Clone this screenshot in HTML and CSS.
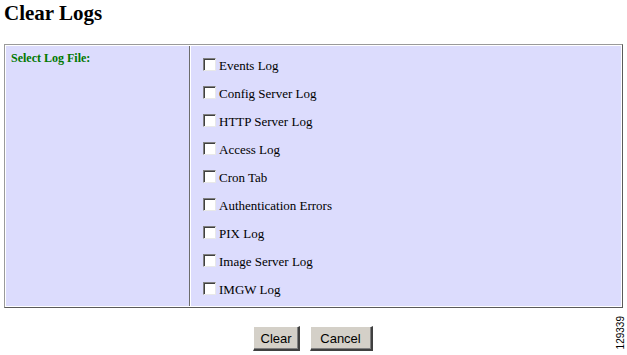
FILE: index.html
```html
<!DOCTYPE html>
<html>
<head>
<meta charset="utf-8">
<link rel="stylesheet" href="styles.css">
</head>
<body>
<div class="page">
  <h1 class="title">Clear Logs</h1>
  <div class="panel">
    <div class="label-cell"><span class="field-label">Select Log File:</span></div>
    <div class="options-cell">
      <label class="opt"><span class="box"></span>Events Log</label>
      <label class="opt"><span class="box"></span>Config Server Log</label>
      <label class="opt"><span class="box"></span>HTTP Server Log</label>
      <label class="opt"><span class="box"></span>Access Log</label>
      <label class="opt"><span class="box"></span>Cron Tab</label>
      <label class="opt"><span class="box"></span>Authentication Errors</label>
      <label class="opt"><span class="box"></span>PIX Log</label>
      <label class="opt"><span class="box"></span>Image Server Log</label>
      <label class="opt"><span class="box"></span>IMGW Log</label>
    </div>
  </div>
  <div class="actions">
    <button class="btn btn-clear">Clear</button>
    <button class="btn btn-cancel">Cancel</button>
  </div>
  <div class="figno">129339</div>
</div>
</body>
</html>
```
FILE: styles.css
```css
html, body {
  margin: 0;
  padding: 0;
  background: #ffffff;
}
.page {
  position: relative;
  width: 627px;
  height: 355px;
  padding: 0 4px;
  box-sizing: border-box;
  font-family: "Liberation Serif", "Times New Roman", serif;
}
.title {
  margin: 0;
  padding-top: 1px;
  height: 43px;
  font-size: 21px;
  line-height: 24px;
  font-weight: bold;
  color: #000;
}
.panel {
  display: flex;
  width: 619px;
  height: 264px;
  box-sizing: border-box;
  border-top: 1px solid #9a9a9a;
  border-left: 1px solid #9a9a9a;
  border-right: 1px solid #5a5a5a;
  border-bottom: 1px solid #5a5a5a;
  background: #ffffff;
  padding: 1px;
  gap: 1px;
}
.label-cell {
  width: 184px;
  background: #dcdcfd;
  border-right: 1px solid #6c6c6c;
  padding: 2px 0 0 5px;
  box-sizing: border-box;
}
.field-label {
  color: #007800;
  font-weight: bold;
  font-size: 12px;
}
.options-cell {
  flex: 1;
  background: #dcdcfd;
  padding: 6px 0 0 12px;
  display: flex;
  flex-direction: column;
}
.opt {
  display: flex;
  align-items: center;
  height: 28px;
  font-size: 13px;
  color: #000;
}
.box {
  width: 13px;
  height: 13px;
  box-sizing: border-box;
  background: #ffffff;
  border-top: 1px solid #808080;
  border-left: 1px solid #808080;
  border-right: 1px solid #e8e8e8;
  border-bottom: 1px solid #e8e8e8;
  box-shadow: inset 1px 1px 0 #404040;
  margin-right: 3px;
  margin-top: -4px;
}
.actions {
  display: flex;
  justify-content: center;
  gap: 10px;
  margin-top: 18px;
  padding-right: 2px;
}
.btn {
  font-family: "Liberation Sans", Arial, sans-serif;
  font-size: 13px;
  height: 25px;
  background: #d4d0c8;
  color: #000;
  border-top: 1px solid #ffffff;
  border-left: 1px solid #ffffff;
  border-right: 2px solid #404040;
  border-bottom: 2px solid #404040;
  box-shadow: inset -1px -1px 0 #808080;
  padding: 0 7px;
}
.btn-clear { width: 47px; }
.btn-cancel { width: 63px; }
.figno {
  position: absolute;
  right: 1px;
  top: 316px;
  writing-mode: vertical-rl;
  transform: rotate(180deg);
  font-family: "Liberation Sans", Arial, sans-serif;
  font-size: 10px;
  color: #000;
}
```
